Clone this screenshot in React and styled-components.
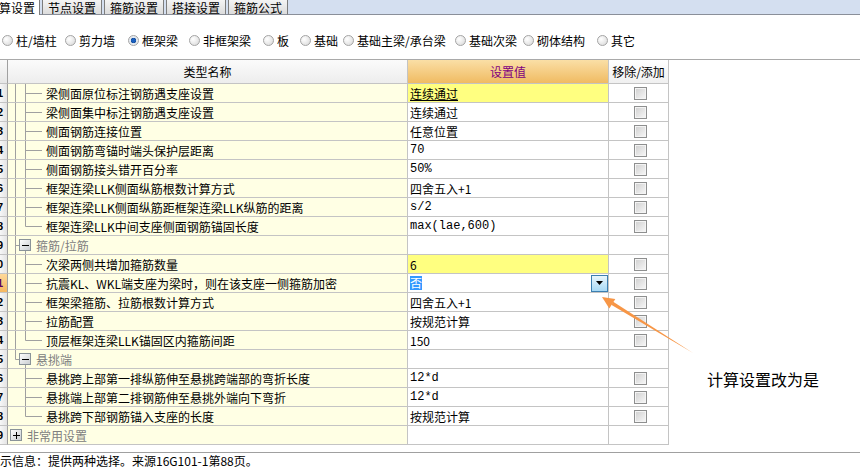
import styled, { createGlobalStyle } from 'styled-components'

const GlobalStyle = createGlobalStyle`
  html, body {
    margin: 0;
    padding: 0;
    background: #fff;
  }
  body {
    font-family: "Noto Sans CJK SC", "Noto Sans", sans-serif;
    font-size: 12px;
    color: #000;
  }
`

const tabs = ['节点设置', '箍筋设置', '搭接设置', '箍筋公式']

const radios = [
  { label: '柱/墙柱', width: 63 },
  { label: '剪力墙', width: 63 },
  { label: '框架梁', width: 61, checked: true },
  { label: '非框架梁', width: 74 },
  { label: '板', width: 37 },
  { label: '基础', width: 43 },
  { label: '基础主梁/承台梁', width: 112 },
  { label: '基础次梁', width: 68 },
  { label: '砌体结构', width: 74 },
  { label: '其它', width: 50 },
]

const rows = [
  { n: 21, kind: 'child', outer: true, name: '梁侧面原位标注钢筋遇支座设置', value: '连续通过', hl: true, underline: true },
  { n: 22, kind: 'child', outer: true, name: '梁侧面集中标注钢筋遇支座设置', value: '连续通过' },
  { n: 23, kind: 'child', outer: true, name: '侧面钢筋连接位置', value: '任意位置' },
  { n: 24, kind: 'child', outer: true, name: '侧面钢筋弯锚时端头保护层距离', value: '70', mono: true },
  { n: 25, kind: 'child', outer: true, name: '侧面钢筋接头错开百分率', value: '50%', mono: true },
  { n: 26, kind: 'child', outer: true, name: '框架连梁LLK侧面纵筋根数计算方式', value: '四舍五入+1' },
  { n: 27, kind: 'child', outer: true, name: '框架连梁LLK侧面纵筋距框架连梁LLK纵筋的距离', value: 's/2', mono: true },
  { n: 28, kind: 'child', outer: true, last: true, name: '框架连梁LLK中间支座侧面钢筋锚固长度', value: 'max(lae,600)', mono: true },
  { n: 29, kind: 'group', outer: true, name: '箍筋/拉筋' },
  { n: 30, kind: 'child', outer: true, name: '次梁两侧共增加箍筋数量', value: '6', hl: true },
  { n: 31, kind: 'child', outer: true, name: '抗震KL、WKL端支座为梁时，则在该支座一侧箍筋加密', value: '否', select: true },
  { n: 32, kind: 'child', outer: true, name: '框架梁箍筋、拉筋根数计算方式', value: '四舍五入+1' },
  { n: 33, kind: 'child', outer: true, name: '拉筋配置', value: '按规范计算' },
  { n: 34, kind: 'child', outer: true, last: true, name: '顶层框架连梁LLK锚固区内箍筋间距', value: '150' },
  { n: 35, kind: 'group', outer: true, last: true, name: '悬挑端' },
  { n: 36, kind: 'child', name: '悬挑跨上部第一排纵筋伸至悬挑跨端部的弯折长度', value: '12*d', mono: true },
  { n: 37, kind: 'child', name: '悬挑端上部第二排钢筋伸至悬挑外端向下弯折', value: '12*d', mono: true },
  { n: 38, kind: 'child', last: true, name: '悬挑跨下部钢筋锚入支座的长度', value: '按规范计算' },
  { n: 39, kind: 'top', closed: true, name: '非常用设置' },
]

const LINE = '#a0a0a0'

const ExpandBox = ({ x, y, closed }) => (
  <g>
    <defs>
      <linearGradient id="boxfill" x1="0" y1="0" x2="1" y2="1">
        <stop offset="0" stopColor="#ffffff" />
        <stop offset="1" stopColor="#c8ccd0" />
      </linearGradient>
    </defs>
    <rect x={x + 0.5} y={y + 0.5} width="11" height="11" fill="url(#boxfill)" stroke="#8a9399" />
    <line x1={x + 3} y1={y + 6.5} x2={x + 10} y2={y + 6.5} stroke="#000" />
    {closed && <line x1={x + 6.5} y1={y + 3} x2={x + 6.5} y2={y + 10} stroke="#000" />}
  </g>
)

const TreeGuide = ({ kind, outer, last, closed }) => {
  if (kind === 'child') {
    return (
      <svg width="38" height="19">
        {outer && <line x1="7.5" y1="0" x2="7.5" y2="19" stroke={LINE} />}
        <line x1="17.5" y1="0" x2="17.5" y2={last ? 9.5 : 19} stroke={LINE} />
        <line x1="17.5" y1="9.5" x2="34" y2="9.5" stroke={LINE} />
      </svg>
    )
  }
  if (kind === 'group') {
    return (
      <svg width="28" height="19">
        <line x1="7.5" y1="0" x2="7.5" y2={last ? 9.5 : 19} stroke={LINE} />
        <line x1="7.5" y1="9.5" x2="11" y2="9.5" stroke={LINE} />
        <line x1="17.5" y1="15" x2="17.5" y2="19" stroke={LINE} />
        <ExpandBox x={11} y={3} />
      </svg>
    )
  }
  return (
    <svg width="19" height="19">
      <ExpandBox x={2} y={3} closed={closed} />
    </svg>
  )
}

const App = () => {
  return (
    <Page>
      <GlobalStyle />
      <TabBar>
        <Tab active>算设置</Tab>
        {tabs.map(t => (
          <Tab key={t}>{t}</Tab>
        ))}
      </TabBar>

      <RadioRow>
        {radios.map(r => (
          <RadioItem key={r.label} width={r.width}>
            <Radio checked={r.checked} />
            <span>{r.label}</span>
          </RadioItem>
        ))}
      </RadioRow>

      <TableArea>
        <Grid>
          <HeadCorner />
          <HeadName>类型名称</HeadName>
          <HeadValue>设置值</HeadValue>
          <HeadCheck>移除/添加</HeadCheck>

          {rows.map(row => (
            <Row key={row.n}>
              <RowHead current={row.select}>
                <span>{row.n}</span>
              </RowHead>
              <NameCell>
                <TreeGuide kind={row.kind} outer={row.outer} last={row.last} closed={row.closed} />
                <NameText group={row.kind !== 'child'}>{row.name}</NameText>
              </NameCell>
              <ValueCell hl={row.hl}>
                {row.select ? (
                  <>
                    <Selected>{row.value}</Selected>
                    <DropButton>
                      <svg width="7" height="4">
                        <polygon points="0,0 7,0 3.5,4" fill="#000" />
                      </svg>
                    </DropButton>
                  </>
                ) : (
                  <ValueText mono={row.mono} underline={row.underline}>
                    {row.value}
                  </ValueText>
                )}
              </ValueCell>
              <CheckCell>{row.kind === 'child' && <CheckBox />}</CheckCell>
            </Row>
          ))}
        </Grid>
      </TableArea>

      <StatusBar>示信息：提供两种选择。来源16G101-1第88页。</StatusBar>

      <Arrow width="105" height="70">
        <polygon points="98,65 16.2,16.8 18.2,13.8" fill="#f79646" />
        <polygon points="7,9 20.3,11.0 14.3,20.6" fill="#f79646" />
      </Arrow>
      <Note>计算设置改为是</Note>
    </Page>
  )
}

const Page = styled.div`
  position: relative;
  width: 860px;
  height: 469px;
  overflow: hidden;
  display: flex;
  flex-direction: column;
`

const TabBar = styled.div`
  display: flex;
  height: 15px;
  background-color: #d4dff0;
  border-bottom: 1px solid #8a8f99;
  box-sizing: border-box;
`

const Tab = styled.div`
  display: flex;
  align-items: center;
  height: 15px;
  padding: ${props => (props.active ? '0 4px 0 0' : '0 5px')};
  margin-right: 2px;
  margin-left: ${props => (props.active ? '-1px' : '0')};
  box-sizing: border-box;
  font-size: 12px;
  line-height: 13px;
  white-space: nowrap;
  background: ${props => (props.active ? '#fff' : 'linear-gradient(#f4f4f4, #dcdcdc)')};
  border-right: 1px solid #7d7d7d;
  border-left: ${props => (props.active ? 'none' : '1px solid #7d7d7d')};
  border-bottom: ${props => (props.active ? 'none' : '1px solid #8a8f99')};
`

const RadioRow = styled.div`
  display: flex;
  align-items: center;
  height: 20px;
  margin-top: 16px;
  padding-left: 2px;
`

const RadioItem = styled.label`
  display: flex;
  align-items: center;
  gap: 3px;
  width: ${props => props.width}px;
  flex: none;
  font-size: 12px;
  white-space: nowrap;
`

const Radio = styled.span`
  width: 11px;
  height: 11px;
  box-sizing: border-box;
  border-radius: 50%;
  border: 1px solid #a4a4a4;
  background: ${props =>
    props.checked
      ? 'radial-gradient(circle, #1a5fbf 0 2px, #0b3b7a 2.5px, #dfe6ef 3px, #f2f2f2 100%)'
      : 'radial-gradient(circle at 35% 35%, #ffffff, #d6d6d6)'};
  flex: none;
`

const TableArea = styled.div`
  margin-top: 9px;
  border-top: 1px solid #a9a9a9;
`

const Grid = styled.div`
  display: grid;
  grid-template-columns: 8px 400px 201px 60px;
  grid-template-rows: 24px;
  grid-auto-rows: 19px;
  width: 669px;
`

const Row = styled.div`
  display: contents;
`

const cell = `
  box-sizing: border-box;
  border-right: 1px solid #c4c4c4;
  border-bottom: 1px solid #c4c4c4;
  display: flex;
  align-items: center;
  overflow: hidden;
  white-space: nowrap;
`

const HeadCorner = styled.div`
  ${cell}
  background: linear-gradient(#fafafa, #e6e6e6);
  border-right-color: #a0a0a0;
`

const HeadName = styled.div`
  ${cell}
  justify-content: center;
  background: linear-gradient(#fbfbfb, #ededed);
  font-size: 12px;
`

const HeadValue = styled.div`
  ${cell}
  justify-content: center;
  background: linear-gradient(#fadfa6, #f0bb62);
  color: #800080;
  font-size: 12px;
`

const HeadCheck = styled.div`
  ${cell}
  justify-content: center;
  background: linear-gradient(#ffffff, #f0f0f0);
  font-size: 12px;
`

const RowHead = styled.div`
  ${cell}
  border-right-color: #a0a0a0;
  background: ${props => (props.current ? 'linear-gradient(#ffd99a, #f6b860)' : 'linear-gradient(90deg, #f7f7f7, #e4e4e4)')};
  color: ${props => (props.current ? '#600060' : '#000')};
  font-family: "Liberation Sans", sans-serif;
  font-size: 11px;
  font-weight: bold;

  & > span {
    margin-left: -9px;
  }
`

const NameCell = styled.div`
  ${cell}
  background-color: #ffffe4;

  & > svg {
    flex: none;
  }
`

const NameText = styled.span`
  font-size: 12px;
  color: ${props => (props.group ? '#808080' : '#000')};
`

const ValueCell = styled.div`
  ${cell}
  background-color: ${props => (props.hl ? '#ffff80' : '#fff')};
  padding-left: 2px;
  justify-content: space-between;
`

const ValueText = styled.span`
  font-family: ${props => (props.mono ? '"Liberation Mono", monospace' : '"Noto Sans CJK SC", sans-serif')};
  font-size: 12px;
  text-decoration: ${props => (props.underline ? 'underline' : 'none')};
`

const Selected = styled.span`
  background-color: #3399ff;
  color: #fff;
  font-size: 12px;
  line-height: 14px;
`

const DropButton = styled.div`
  width: 17px;
  height: 17px;
  box-sizing: border-box;
  border: 1px solid #3c7fb1;
  background: linear-gradient(#eaf6fd, #a7d9f5);
  display: flex;
  align-items: center;
  justify-content: center;
`

const CheckCell = styled.div`
  ${cell}
  justify-content: center;
  background-color: #fff;
`

const CheckBox = styled.span`
  width: 13px;
  height: 13px;
  box-sizing: border-box;
  border: 1px solid #8e8f8f;
  background: linear-gradient(135deg, #cfcfcf, #f8f8f8);
  box-shadow: inset 0 0 0 1px #f4f4f4;
  margin-left: 4px;
`

const StatusBar = styled.div`
  margin-top: 7px;
  border-top: 1px solid #a0a0a0;
  font-size: 12px;
  line-height: 16px;
  white-space: nowrap;
`

const Arrow = styled.svg`
  position: absolute;
  left: 595px;
  top: 288px;
`

const Note = styled.div`
  position: absolute;
  left: 707px;
  top: 369px;
  font-size: 16px;
  line-height: 20px;
  white-space: nowrap;
`

export default App
